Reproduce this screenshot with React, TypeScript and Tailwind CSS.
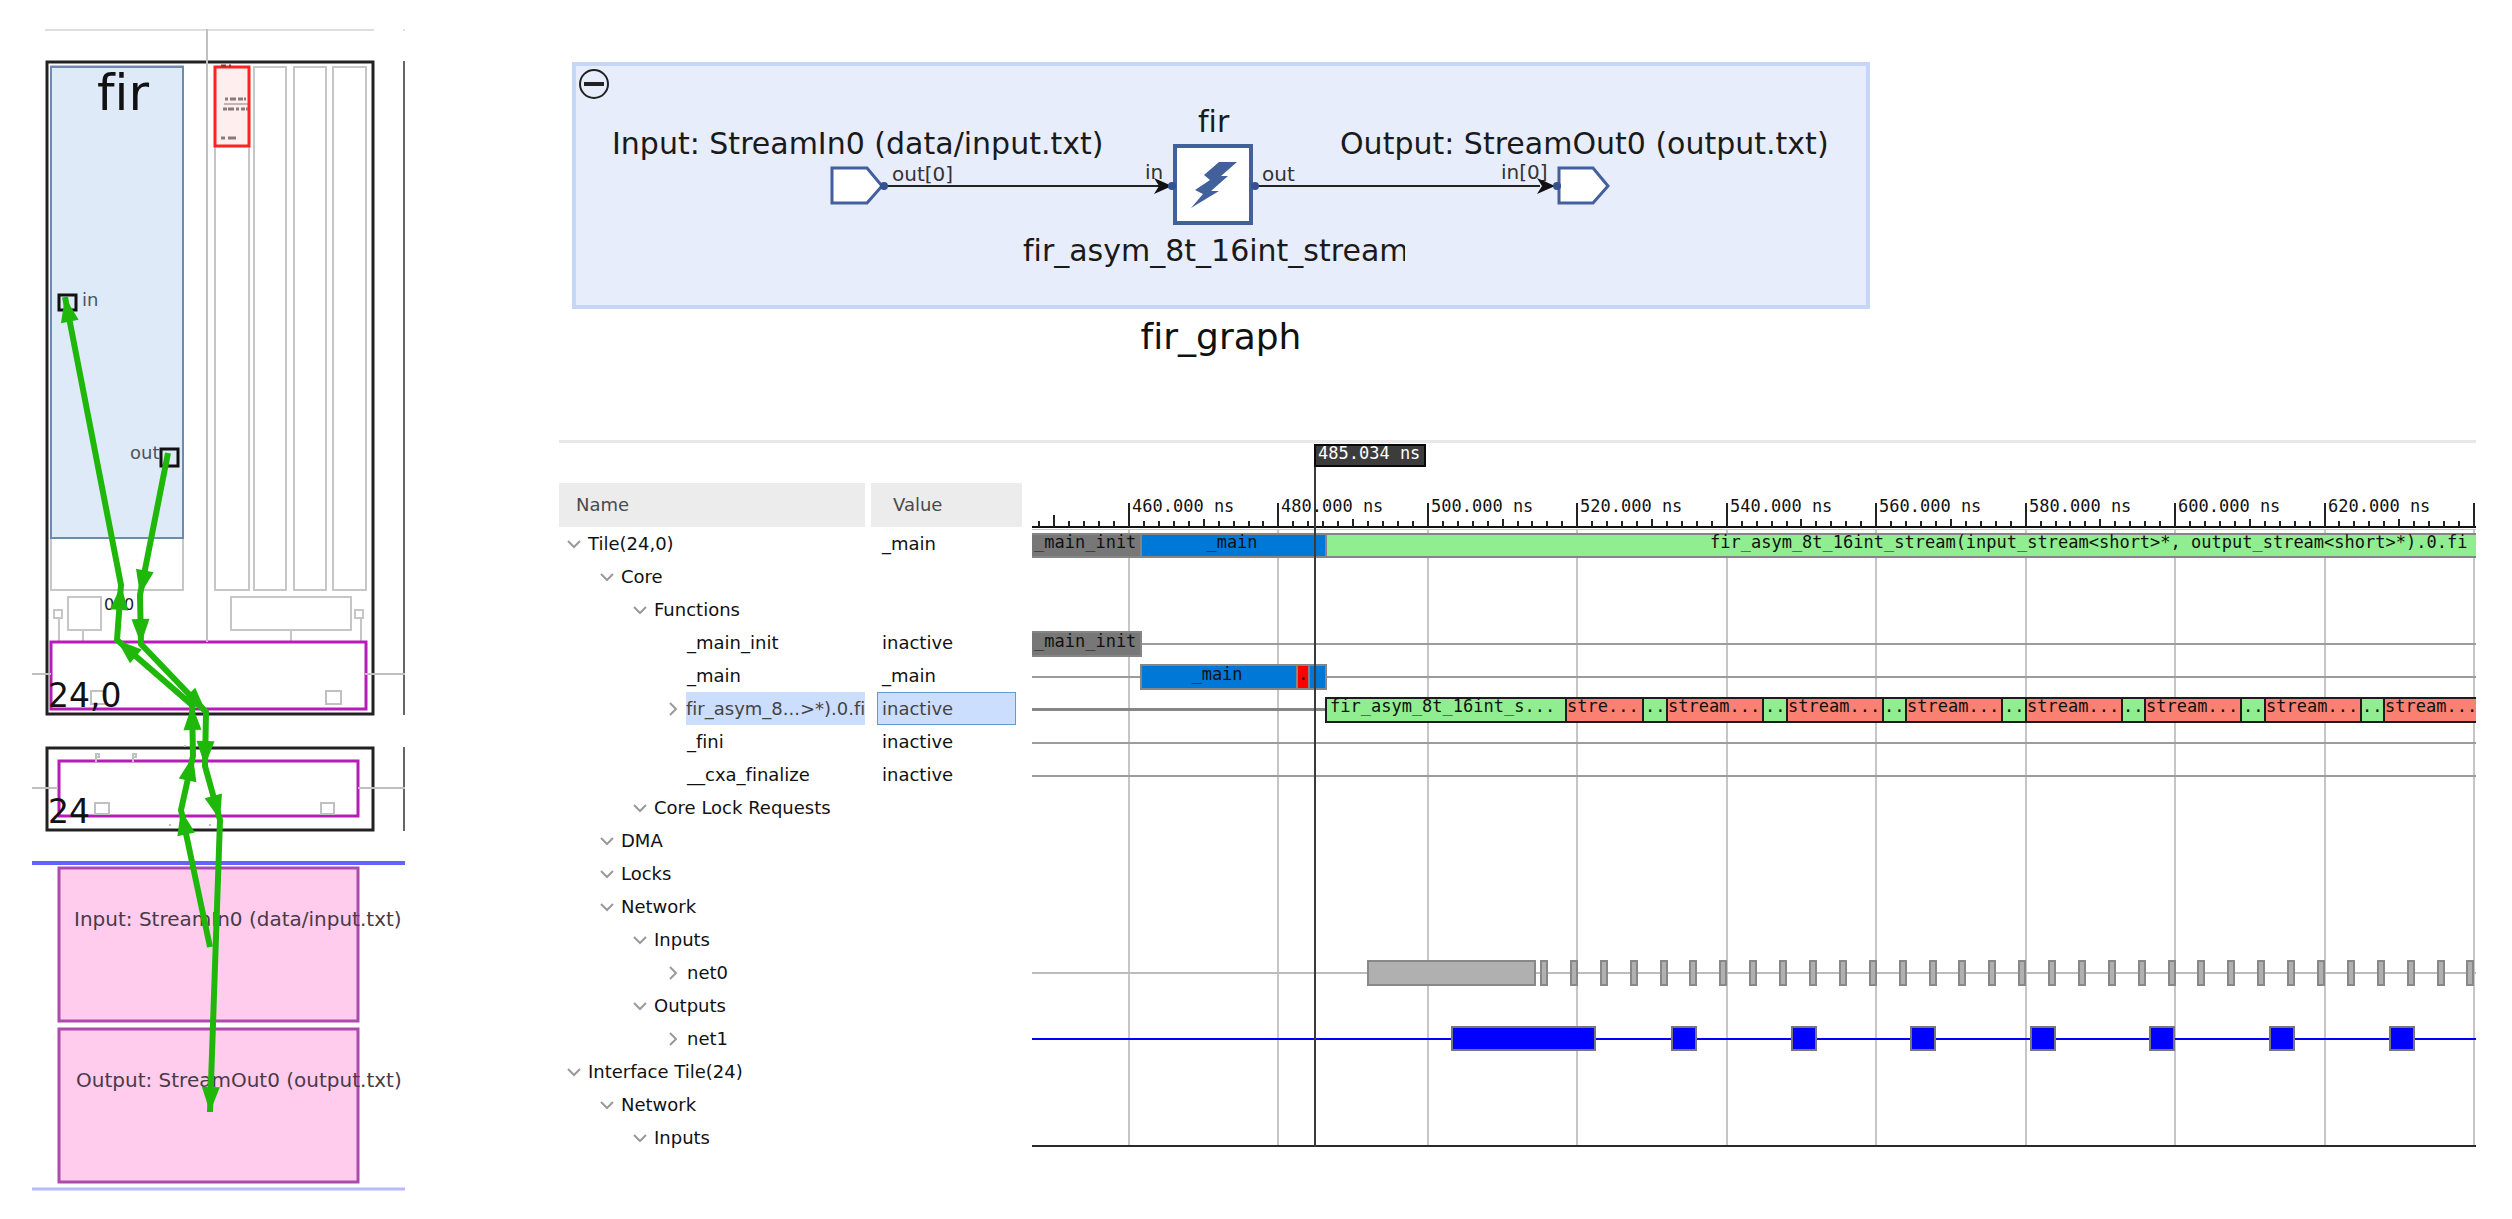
import React from 'react';

type Point = [number, number];

const GREEN = '#1fb80a';

/* ---------- Array view (left) ---------- */

function arrowHead([x1, y1]: Point, [x2, y2]: Point): string {
  const length = Math.hypot(x2 - x1, y2 - y1);
  const ux = (x2 - x1) / length;
  const uy = (y2 - y1) / length;
  const bx = x2 - ux * 25;
  const by = y2 - uy * 25;
  return `${x2},${y2} ${bx - uy * 9},${by + ux * 9} ${bx + uy * 9},${by - ux * 9}`;
}

function Route({ points }: { points: Point[] }) {
  return (
    <g>
      <polyline points={points.map((p) => p.join(',')).join(' ')} fill="none" stroke={GREEN} strokeWidth={6} />
      {points.slice(1).map((p, i) => (
        <polygon key={i} points={arrowHead(points[i], p)} fill={GREEN} />
      ))}
    </g>
  );
}

const inputRoute: Point[] = [[210, 947], [181, 810], [193, 756], [192, 705], [117, 640], [121, 585], [65, 297]];
const outputRoute: Point[] = [[168, 453], [140, 595], [141, 644], [206, 712], [205, 766], [220, 820], [210, 1112]];
const bankColumns = [[215, 34], [254, 32], [294, 32], [333, 33]];

function ArrayView() {
  return (
    <svg className="block w-[373px] h-[1170px] shrink-0" viewBox="32 24 373 1170" role="img" aria-label="Array view">
      <g fill="none" stroke="#c6c6c6" strokeWidth={2}>
        <path d="M45 30H374M403 30H405" stroke="#dedede" />
        <rect x={51} y={66} width={132} height={524} />
        {bankColumns.map(([x, w]) => (
          <rect key={x} x={x} y={67} width={w} height={523} />
        ))}
        <rect x={54} y={610} width={8} height={8} />
        <rect x={68} y={597} width={33} height={33} />
        <rect x={231} y={597} width={120} height={33} />
        <rect x={355} y={610} width={8} height={8} />
        <path d="M59 618V641M83 630V641M291 630V641M361 618V641" />
      </g>
      <rect x={51} y={67} width={132} height={471} fill="#deeaf7" stroke="#6b8bb0" strokeWidth={2} />
      <rect x={215} y={67} width={34} height={79} fill="#ffeeee" stroke="#ff2222" strokeWidth={3} />
      <g stroke="#8a7a7a" strokeWidth={3} fill="none">
        <path d="M225 99H246" strokeDasharray="3 2 6 2 5 1" />
        <path d="M224 104H248" strokeWidth={1} />
        <path d="M223 109H248" strokeDasharray="4 1 6 2 3 2" />
        <path d="M221 138H236" strokeDasharray="4 3 8 2" />
        <path d="M221 66H231" stroke="#a03030" strokeDasharray="5 3 2 2" />
      </g>
      <g fill="none" stroke="#222222" strokeWidth={3}>
        <rect x={47} y={62} width={326} height={652} />
        <rect x={47} y={748} width={326} height={82} />
      </g>
      <path d="M404 61V715M404 747V831" stroke="#666666" strokeWidth={2} />
      <g fill="none" stroke="#b81cb8" strokeWidth={3}>
        <rect x={51} y={642} width={315} height={67} />
        <rect x={59} y={761} width={299} height={55} />
      </g>
      <g fill="none" stroke="#c0c0c0" strokeWidth={2}>
        <path d="M207 29V642M32 674H51M365 674H405M32 788H58M358 788H405" />
        <rect x={91} y={691} width={15} height={13} />
        <rect x={326} y={691} width={15} height={13} />
        <rect x={95} y={803} width={14} height={11} />
        <rect x={321} y={803} width={13} height={11} />
        <path d="M96 762V754H99V757H97M133 762V754H136V757H134M169 825H171M209 825H211M184 746H186" />
      </g>
      <g fill="none" strokeWidth={4}>
        <path d="M32 863H405" stroke="#6363ff" />
        <path d="M32 1189H405" stroke="#b9b9ff" strokeWidth={3} />
      </g>
      <g fill="#ffccee" stroke="#ad4bad" strokeWidth={3}>
        <rect x={59} y={868} width={299} height={153} />
        <rect x={59} y={1029} width={299} height={153} />
      </g>
      <g fill="none" stroke="#111111" strokeWidth={3}>
        <rect x={59} y={295} width={17} height={15} />
        <rect x={161} y={449} width={17} height={17} />
      </g>
      <text x={97} y={110} className="text-[50px]" fill="#111111">fir</text>
      <g className="text-[18px]" fill="#4c5560">
        <text x={82} y={306}>in</text>
        <text x={130} y={459}>out</text>
      </g>
      <g className="text-[16px]" fill="#222222">
        <text x={104} y={610}>0</text>
        <text x={124} y={610}>0</text>
      </g>
      <g className="text-[33px]" fill="#111111">
        <text x={48} y={707}>24,0</text>
        <text x={48} y={823}>24</text>
      </g>
      <g className="text-[20px]" fill="#4a3a46">
        <text x={74} y={926}>Input: StreamIn0 (data/input.txt)</text>
        <text x={76} y={1087}>Output: StreamOut0 (output.txt)</text>
      </g>
      <Route points={inputRoute} />
      <Route points={outputRoute} />
    </svg>
  );
}

/* ---------- Graph view (top right) ---------- */

function EdgeArrow({ x }: { x: number }) {
  return <path d={`M${x} 186L${x - 18} 178L${x - 13} 186L${x - 18} 194Z`} fill="#111111" />;
}

function GraphView() {
  return (
    <figure className="ml-[13px] max-w-[1298px]">
      <div className="relative h-[247px] overflow-hidden border-4 border-[#c6d7f6] bg-[#e7edfa]">
        <svg className="absolute inset-0 h-full w-full" role="img" aria-label="fir_graph dataflow">
          <defs>
            <clipPath id="clip-in"><rect x={600} y={110} width={503} height={60} /></clipPath>
            <clipPath id="clip-kernel"><rect x={1000} y={220} width={405} height={60} /></clipPath>
            <clipPath id="clip-out"><rect x={1330} y={110} width={499} height={60} /></clipPath>
          </defs>
          <g transform="translate(-576 -66)">
            <path d="M884 186H1160M1256 186H1540" stroke="#222222" strokeWidth={2} />
            <g fill="#ffffff" stroke="#41609c" strokeWidth={3}>
              <path d="M832 168H867L882 186L867 203H832Z" />
              <path d="M1559 168H1593L1608 186L1593 203H1559Z" />
              <rect x={1175} y={146} width={76} height={77} strokeWidth={4} />
            </g>
            <path
              d="M1219 162H1237L1221 176H1228L1211 191H1219L1191 208L1203 194L1195 190L1210 180L1204 175Z"
              fill="#41609c"
            />
            <g className="text-[30px]" fill="#1a1a1a">
              <text x={612} y={154} clipPath="url(#clip-in)">Input: StreamIn0 (data/input.txt)</text>
              <text x={1340} y={154} clipPath="url(#clip-out)">Output: StreamOut0 (output.txt)</text>
              <text x={1198} y={132}>fir</text>
              <text x={1023} y={261} clipPath="url(#clip-kernel)">fir_asym_8t_16int_stream</text>
            </g>
            <g className="text-[20px]" fill="#333333">
              <text x={892} y={181}>out[0]</text>
              <text x={1145} y={179}>in</text>
              <text x={1262} y={181}>out</text>
              <text x={1501} y={179}>in[0]</text>
            </g>
            <EdgeArrow x={1172} />
            <EdgeArrow x={1555} />
            <g fill="#33528f">
              <circle cx={884} cy={186} r={4} />
              <circle cx={1172} cy={186} r={4} />
              <circle cx={1255} cy={186} r={4} />
              <circle cx={1557} cy={186} r={4} />
            </g>
          </g>
        </svg>
        <button type="button" aria-label="Collapse fir_graph" className="relative m-0.5 block size-8">
          <svg className="size-8" viewBox="0 0 32 32" fill="none" stroke="#222222">
            <circle cx={16} cy={16} r={14} strokeWidth={2} />
            <path d="M6 16H26" strokeWidth={4} />
          </svg>
        </button>
      </div>
      <figcaption className="mt-1.5 text-center text-[36px] leading-[44px] text-[#111111]">fir_graph</figcaption>
    </figure>
  );
}

/* ---------- Trace view: signal tree ---------- */

type Row = { name: string; level: 0 | 1 | 2 | 3; state?: 'open' | 'closed'; value?: string; selected?: boolean };

const rows: Row[] = [
  { name: 'Tile(24,0)', level: 0, state: 'open', value: '_main' },
  { name: 'Core', level: 1, state: 'open' },
  { name: 'Functions', level: 2, state: 'open' },
  { name: '_main_init', level: 3, value: 'inactive' },
  { name: '_main', level: 3, value: '_main' },
  { name: 'fir_asym_8...>*).0.fi', level: 3, state: 'closed', value: 'inactive', selected: true },
  { name: '_fini', level: 3, value: 'inactive' },
  { name: '__cxa_finalize', level: 3, value: 'inactive' },
  { name: 'Core Lock Requests', level: 2, state: 'open' },
  { name: 'DMA', level: 1, state: 'open' },
  { name: 'Locks', level: 1, state: 'open' },
  { name: 'Network', level: 1, state: 'open' },
  { name: 'Inputs', level: 2, state: 'open' },
  { name: 'net0', level: 3, state: 'closed' },
  { name: 'Outputs', level: 2, state: 'open' },
  { name: 'net1', level: 3, state: 'closed' },
  { name: 'Interface Tile(24)', level: 0, state: 'open' },
  { name: 'Network', level: 1, state: 'open' },
  { name: 'Inputs', level: 2, state: 'open' },
];

const indent = ['pl-2', 'pl-[41px]', 'pl-[74px]', 'pl-[107px]'];

function Toggle({ row }: { row: Row }) {
  if (!row.state) return <span className="w-[14px] shrink-0" />;
  return (
    <button type="button" aria-expanded={row.state === 'open'} aria-label={`Toggle ${row.name}`} className="w-[14px] shrink-0">
      <svg className="block size-[14px]" viewBox="0 0 14 14" fill="none" stroke="#9a9a9a" strokeWidth={2}>
        <path d={row.state === 'open' ? 'M1 4L7 10L13 4' : 'M4 1L10 7L4 13'} />
      </svg>
    </button>
  );
}

function SignalTable() {
  return (
    <div className="w-[463px] shrink-0 pt-10">
      <table className="w-full table-fixed border-collapse text-[18px] leading-[33px]">
        <thead className="text-[#4a4a4a]">
          <tr>
            <th scope="col" className="w-[312px] p-0 pr-1.5 text-left font-normal">
              <span className="block bg-[#ececec] pl-[17px] leading-[44px]">Name</span>
            </th>
            <th scope="col" className="p-0 text-left font-normal">
              <span className="block bg-[#ececec] pl-[22px] leading-[44px]">Value</span>
            </th>
          </tr>
        </thead>
        <tbody>
          {rows.map((row, i) => (
            <tr key={i}>
              <td className="p-0 pr-1.5">
                <div className={`flex items-center gap-1.5 ${indent[row.level]}`}>
                  <Toggle row={row} />
                  <span
                    className={
                      row.selected
                        ? 'flex-1 whitespace-nowrap bg-[#ccdefe] text-[#444444]'
                        : 'flex-1 whitespace-nowrap pl-px text-[#111111]'
                    }
                  >
                    {row.name}
                  </span>
                </div>
              </td>
              <td className="p-0 px-1.5">
                {row.value && (
                  <span
                    className={
                      row.selected
                        ? 'block border border-[#5a9fd4] bg-[#ccdefe] pl-1 leading-[31px] text-[#444444]'
                        : 'block pl-[5px] text-[#111111]'
                    }
                  >
                    {row.value}
                  </span>
                )}
              </td>
            </tr>
          ))}
        </tbody>
      </table>
    </div>
  );
}

/* ---------- Trace view: waveform ---------- */

const ORIGIN = 97; // x of 460 ns
const PX_PER_NS = 7.472;
const PERIOD = 16; // ns
const xAt = (t: number) => Math.round(ORIGIN + (t - 460) * PX_PER_NS);

const majorTimes = Array.from({ length: 10 }, (_, i) => 460 + i * 20);
const minorTimes = Array.from({ length: 98 }, (_, i) => 448 + i * 2).filter((t) => t % 20 !== 0 && t <= 640);
const net0Pulses = Array.from({ length: 32 }, (_, i) => 515 + i * 4);
const net1Pulses = Array.from({ length: 7 }, (_, i) => 532.7 + i * PERIOD);
const streamCalls = Array.from({ length: 7 }, (_, i) => 528.8 + i * PERIOD);

function Waveform() {
  return (
    <svg
      className="block h-[705px] min-w-0 flex-1 font-['DejaVu_Sans_Mono','Liberation_Mono',monospace] text-[17px]"
      role="img"
      aria-label="Trace waveform"
    >
      {/* grid */}
      {majorTimes.map((t) => (
        <path key={t} d={`M${xAt(t)} 86V703`} stroke="#c6c6c6" strokeWidth={2} />
      ))}
      {/* ruler */}
      <rect x={0} y={86} width="100%" height={1} fill="#c6c6c6" />
      <rect x={0} y={83} width="100%" height={2} fill="#111111" />
      {minorTimes.map((t) => (
        <path key={t} d={`M${xAt(t)} ${t === 450 ? 72 : t % 10 === 0 ? 76 : 78}V84`} stroke="#222222" strokeWidth={2} />
      ))}
      {majorTimes.map((t) => (
        <g key={t}>
          <path d={`M${xAt(t)} 60V84`} stroke="#222222" strokeWidth={2} />
          {t < 640 && (
            <text x={xAt(t) + 3} y={69} fill="#111111">{`${t}.000 ns`}</text>
          )}
        </g>
      ))}
      {/* idle levels */}
      <g fill="#9c9c9c">
        <rect x={0} y={200} width="100%" height={2} />
        <rect x={0} y={233} width="100%" height={2} />
        <rect x={0} y={265} width="100%" height={3} fill="#868686" />
        <rect x={0} y={299} width="100%" height={2} />
        <rect x={0} y={332} width="100%" height={2} />
      </g>
      {/* tile */}
      <g stroke="#858585" strokeWidth={2}>
        <rect x={293} y={91} width="100%" height={23} fill="#90ee90" />
        <rect x={108} y={91} width={186} height={23} fill="#0078d7" />
        <rect x={-2} y={91} width={111} height={23} fill="#777777" />
        <rect x={-2} y={189} width={111} height={24} fill="#777777" />
        <rect x={109} y={222} width={185} height={24} fill="#0078d7" />
        <rect x={265} y={222} width={12} height={24} fill="#ff0000" />
      </g>
      <g fill="#111111">
        <text x={2} y={105}>_main_init</text>
        <text x={200} y={105} textAnchor="middle">_main</text>
        <text x={678} y={105}>{'fir_asym_8t_16int_stream(input_stream<short>*, output_stream<short>*).0.fi'}</text>
        <text x={2} y={204}>_main_init</text>
        <text x={185} y={237} textAnchor="middle">_main</text>
        <text x={266} y={237}>.</text>
      </g>
      {/* fir */}
      <g stroke="#1c1c1c" strokeWidth={2}>
        <rect x={294} y={255} width="100%" height={24} fill="#90ee90" />
        <rect x={534} y={255} width={77} height={24} fill="#fa8072" />
        {streamCalls.map((t) => (
          <rect key={t} x={xAt(t) + 24} y={255} width={96} height={24} fill="#fa8072" />
        ))}
      </g>
      <g fill="#111111">
        <text x={298} y={269}>fir_asym_8t_16int_s...</text>
        <text x={535} y={269}>stre...</text>
        {streamCalls.map((t) => (
          <g key={t}>
            <text x={xAt(t) + 2} y={269}>..</text>
            <text x={xAt(t) + 25} y={269}>stream...</text>
          </g>
        ))}
      </g>
      {/* net0 */}
      <rect x={0} y={529} width="100%" height={2} fill="#bcbcbc" />
      <g fill="#b0b0b0" stroke="#888888" strokeWidth={2}>
        <rect x={336} y={518} width={167} height={24} />
        {net0Pulses.map((t) => (
          <rect key={t} x={xAt(t) + 1} y={518} width={6} height={24} />
        ))}
      </g>
      {/* net1 */}
      <rect x={0} y={595} width="100%" height={2} fill="#0000ff" />
      <g fill="#0000ff" stroke="#777777" strokeWidth={2}>
        <rect x={420} y={584} width={143} height={23} />
        {net1Pulses.map((t) => (
          <rect key={t} x={xAt(t)} y={584} width={24} height={23} />
        ))}
      </g>
      <rect x={0} y={702} width="100%" height={2} fill="#2a2a2a" />
      {/* cursor */}
      <rect x={282} y={2} width={2} height={702} fill="#3a3a3a" />
      <rect x={283} y={2} width={110} height={21} fill="#3c3c3c" stroke="#0a0a0a" strokeWidth={2} />
      <text x={286} y={16} fill="#ffffff">485.034 ns</text>
    </svg>
  );
}

export default function App() {
  return (
    <div className="flex min-h-screen gap-[154px] bg-white pt-6 pr-9 pl-8 font-['DejaVu_Sans',sans-serif] [font-variant-ligatures:none]">
      <ArrayView />
      <main className="flex min-w-0 flex-1 flex-col pt-[38px]">
        <GraphView />
        <section aria-label="Trace view" className="mt-[81px] border-t-3 border-[#e8e8e8]">
          <div className="flex items-start gap-[10px]">
            <SignalTable />
            <Waveform />
          </div>
        </section>
      </main>
    </div>
  );
}
